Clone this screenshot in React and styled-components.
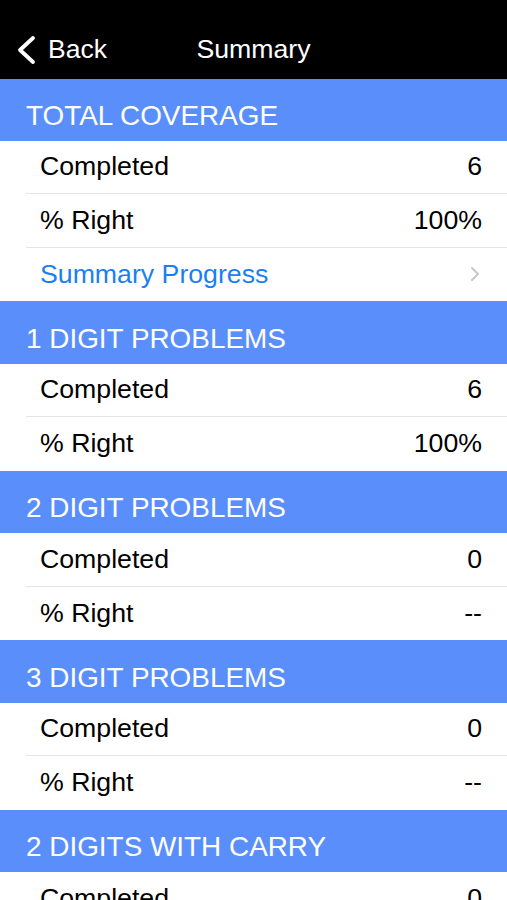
import styled, { createGlobalStyle } from 'styled-components'

const GlobalStyle = createGlobalStyle`
  html, body {
    margin: 0;
    padding: 0;
    background: #ffffff;
  }
  body {
    font-family: "Liberation Sans", Arial, Helvetica, sans-serif;
    -webkit-font-smoothing: antialiased;
  }
`

const Screen = styled.div`
  width: 507px;
  height: 900px;
  overflow: hidden;
  background: #ffffff;
  display: flex;
  flex-direction: column;
`

const NavBar = styled.div`
  flex-shrink: 0;
  height: 79px;
  box-sizing: border-box;
  padding-top: 20px;
  background: #000000;
  color: #ffffff;
  display: grid;
  grid-template-columns: 1fr auto 1fr;
  align-items: center;
`

const BackButton = styled.div`
  display: flex;
  align-items: center;
  padding-left: 16px;
  gap: 12px;
  font-size: 26.5px;
  line-height: 1;
`

const NavTitle = styled.div`
  font-size: 26.7px;
  line-height: 1;
  text-align: center;
`

const SectionHeader = styled.div`
  flex-shrink: 0;
  height: ${(p) => (p.$first ? '61.5px' : '62.5px')};
  box-sizing: border-box;
  padding: 13px 26px 0;
  background: #5a8ffb;
  color: #ffffff;
  display: flex;
  align-items: center;
  font-size: 27.9px;
  line-height: 1;
  text-transform: uppercase;
  white-space: nowrap;
`

const Group = styled.div`
  flex-shrink: 0;
  padding-left: 26px;
  background: #ffffff;
`

const Row = styled.div`
  height: 53.5px;
  box-sizing: border-box;
  padding: 0 25px 0 14px;
  display: flex;
  align-items: center;
  justify-content: space-between;
  font-size: 26.7px;
  line-height: 1;
  color: ${(p) => (p.$link ? '#1a7ff3' : '#000000')};
  border-bottom: 1px solid #e4e4e6;

  &:last-child {
    border-bottom: none;
  }
`

const Value = styled.span`
  color: #000000;
`

const BackChevron = () => (
  <svg width="20" height="30" viewBox="0 0 20 30">
    <path
      d="M17 3 L4 15 L17 27"
      fill="none"
      stroke="#ffffff"
      strokeWidth="3.8"
      strokeLinecap="round"
      strokeLinejoin="round"
    />
  </svg>
)

const Disclosure = () => (
  <svg width="10" height="16" viewBox="0 0 10 16" style={{ marginRight: 2 }}>
    <path
      d="M2 2 L8 8 L2 14"
      fill="none"
      stroke="#c7c7cc"
      strokeWidth="2"
      strokeLinecap="round"
      strokeLinejoin="round"
    />
  </svg>
)

const sections = [
  {
    title: 'Total Coverage',
    rows: [
      ['Completed', '6'],
      ['% Right', '100%'],
    ],
    link: 'Summary Progress',
  },
  {
    title: '1 Digit Problems',
    rows: [
      ['Completed', '6'],
      ['% Right', '100%'],
    ],
  },
  {
    title: '2 Digit Problems',
    rows: [
      ['Completed', '0'],
      ['% Right', '--'],
    ],
  },
  {
    title: '3 Digit Problems',
    rows: [
      ['Completed', '0'],
      ['% Right', '--'],
    ],
  },
  {
    title: '2 Digits with Carry',
    rows: [
      ['Completed', '0'],
      ['% Right', '--'],
    ],
  },
]

export default function App() {
  return (
    <>
      <GlobalStyle />
      <Screen>
        <NavBar>
          <BackButton>
            <BackChevron />
            Back
          </BackButton>
          <NavTitle>Summary</NavTitle>
          <div />
        </NavBar>
        {sections.map((s, i) => (
          <div key={s.title}>
            <SectionHeader $first={i === 0}>{s.title}</SectionHeader>
            <Group>
              {s.rows.map(([label, value]) => (
                <Row key={label}>
                  <span>{label}</span>
                  <Value>{value}</Value>
                </Row>
              ))}
              {s.link && (
                <Row $link>
                  <span>{s.link}</span>
                  <Disclosure />
                </Row>
              )}
            </Group>
          </div>
        ))}
      </Screen>
    </>
  )
}
